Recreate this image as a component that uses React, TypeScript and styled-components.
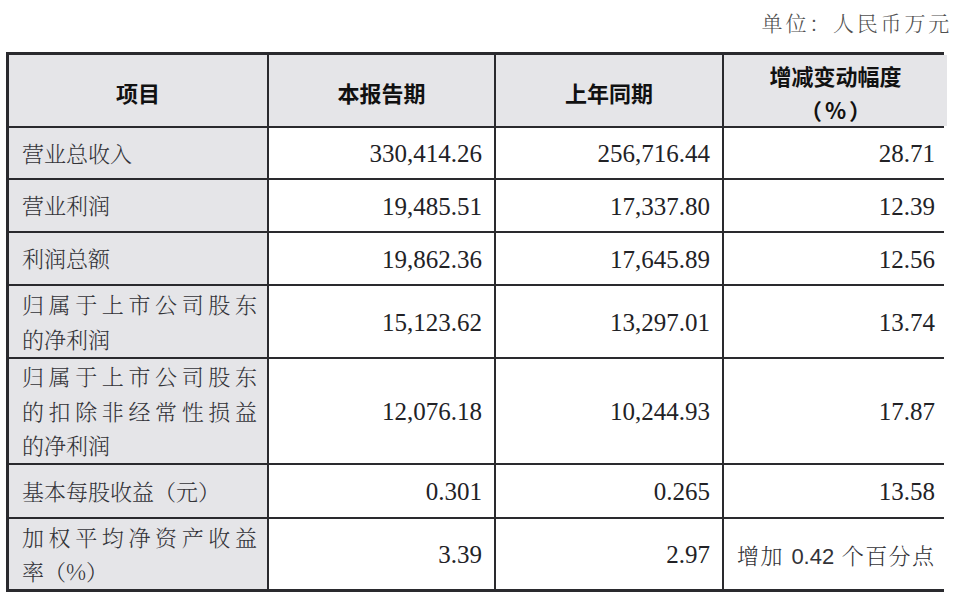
import React from 'react'
import styled, { createGlobalStyle } from 'styled-components'

const GlobalStyle = createGlobalStyle`
  html, body {
    margin: 0;
    padding: 0;
    background: #ffffff;
  }
  body {
    font-family: "Liberation Serif", "Noto Serif CJK SC", "Noto Sans CJK SC", serif;
    -webkit-font-smoothing: antialiased;
  }
`

type LabelLine = { text: string; full?: boolean }
type Row = { label: LabelLine[]; values: string[]; note?: boolean }

const rows: Row[] = [
  { label: [{ text: '营业总收入' }], values: ['330,414.26', '256,716.44', '28.71'] },
  { label: [{ text: '营业利润' }], values: ['19,485.51', '17,337.80', '12.39'] },
  { label: [{ text: '利润总额' }], values: ['19,862.36', '17,645.89', '12.56'] },
  {
    label: [{ text: '归属于上市公司股东', full: true }, { text: '的净利润' }],
    values: ['15,123.62', '13,297.01', '13.74'],
  },
  {
    label: [
      { text: '归属于上市公司股东', full: true },
      { text: '的扣除非经常性损益', full: true },
      { text: '的净利润' },
    ],
    values: ['12,076.18', '10,244.93', '17.87'],
  },
  { label: [{ text: '基本每股收益（元）' }], values: ['0.301', '0.265', '13.58'] },
  {
    label: [{ text: '加权平均净资产收益', full: true }, { text: '率（%）' }],
    values: ['3.39', '2.97', '增加 0.42 个百分点'],
    note: true,
  },
]

const App = () => {
  return (
    <Page>
      <GlobalStyle />
      <Caption>
        <span>单位：人民币万元</span>
      </Caption>
      <Sheet>
        <Cell $tone="head" $align="center">
          <HeadText>项目</HeadText>
        </Cell>
        <Cell $tone="head" $align="center">
          <HeadText>本报告期</HeadText>
        </Cell>
        <Cell $tone="head" $align="center">
          <HeadText>上年同期</HeadText>
        </Cell>
        <Cell $tone="head" $align="center">
          <HeadText>
            增减变动幅度
            <br />
            <Paren>（%）</Paren>
          </HeadText>
        </Cell>

        {rows.map((row, i) => (
          <React.Fragment key={i}>
            <Cell $tone="label" $align="left">
              <Label>
                {row.label.map((l, j) => (
                  <Line key={j} $full={!!l.full}>
                    {l.text}
                  </Line>
                ))}
              </Label>
            </Cell>
            {row.values.map((v, j) =>
              row.note && j === 2 ? (
                <Cell key={j} $tone="value" $align="left">
                  <Note>{v}</Note>
                </Cell>
              ) : (
                <Cell key={j} $tone="value" $align="right">
                  <Num>{v}</Num>
                </Cell>
              )
            )}
          </React.Fragment>
        ))}
      </Sheet>
    </Page>
  )
}

const Page = styled.div`
  width: 960px;
  height: 602px;
  overflow: hidden;
  padding: 0 10px 0 6px;
  box-sizing: border-box;
`

const Caption = styled.div`
  height: 52px;
  display: flex;
  align-items: center;
  justify-content: flex-end;
  padding-bottom: 8px;
  box-sizing: border-box;

  span {
    font-family: "Noto Serif CJK SC", "Noto Sans CJK SC", serif;
    font-size: 21px;
    font-weight: 300;
    letter-spacing: 2.8px;
    margin-right: -2px;
    color: #505050;
  }
`

const Sheet = styled.div`
  display: grid;
  grid-template-columns: 258px 225px 226px 223px;
  grid-template-rows: 71px 50px 51px 51px 71px 104px 52px 70px;
  gap: 2px;
  padding: 3px;
  width: 932px;
  background: #2a2a2e;
`

const Cell = styled.div<{ $tone: 'head' | 'label' | 'value'; $align: 'left' | 'center' | 'right' }>`
  display: flex;
  align-items: center;
  justify-content: ${(p) =>
    p.$align === 'center' ? 'center' : p.$align === 'right' ? 'flex-end' : 'stretch'};
  background: ${(p) => (p.$tone === 'value' ? '#ffffff' : '#e5e5e8')};
  padding: ${(p) =>
    p.$align === 'right' ? '0 12px 0 0' : p.$align === 'left' ? '0 10px 0 13px' : '0'};
  box-sizing: border-box;
  min-width: 0;
`

const HeadText = styled.div`
  font-family: "Noto Sans CJK SC", sans-serif;
  font-weight: 700;
  font-size: 22px;
  line-height: 34px;
  color: #111111;
  text-align: center;
  margin-top: 2px;
`

const Paren = styled.span`
  letter-spacing: 3px;
  margin-right: -3px;
`

const Label = styled.div`
  width: 100%;
  font-family: "Noto Serif CJK SC", "Noto Sans CJK SC", serif;
  font-weight: 300;
  font-size: 22px;
  line-height: 34.5px;
  color: #333338;
`

const Line = styled.div<{ $full: boolean }>`
  white-space: nowrap;
  text-align: ${(p) => (p.$full ? 'justify' : 'left')};
  text-align-last: ${(p) => (p.$full ? 'justify' : 'auto')};
`

const Num = styled.span`
  font-family: "Liberation Serif", serif;
  font-size: 25px;
  color: #222226;
  margin-top: 2px;
`

const Note = styled.div`
  width: 100%;
  font-family: "Liberation Sans", "Noto Serif CJK SC", "Noto Sans CJK SC", sans-serif;
  font-weight: 300;
  font-size: 22px;
  color: #333338;
  text-align: justify;
  text-align-last: justify;
  padding-right: 3px;
  box-sizing: border-box;
`

export default App
